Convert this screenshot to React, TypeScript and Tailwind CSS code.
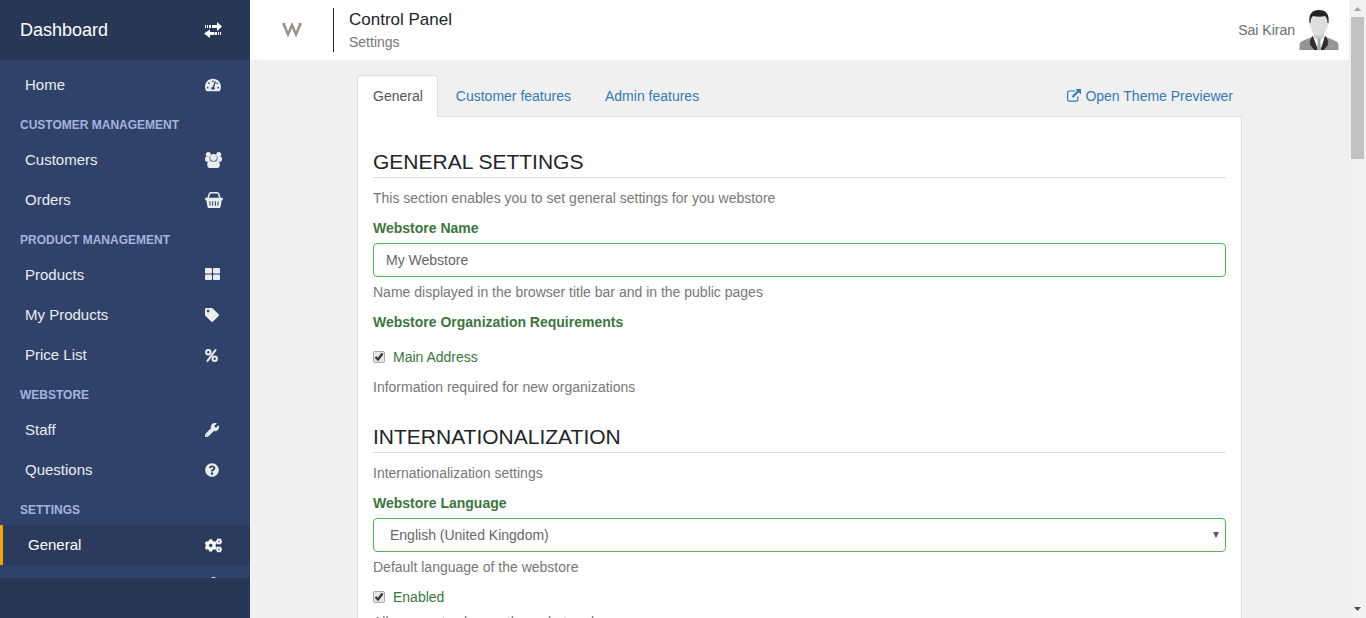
import type { ReactNode } from "react";
import {
  FaCogs,
  FaQuestionCircle,
  FaTachometerAlt,
  FaTag,
  FaUser,
  FaWrench,
} from "react-icons/fa";

function TransferIcon() {
  return (
    <svg width="18" height="16" viewBox="0 0 18 16" fill="currentColor" aria-hidden="true">
      <path d="M1 3h1v3H1zM3 3h1v3H3zM5 3h2v3H5zM8 3h5V0l5 4.500L13 9V6H8z" />
      <path d="M17 10h-1v3h1zM15 10h-1v3h1zM13 10h-2v3h2zM10.500 10H6V7.500L0 11.500 6 16v-3h4.500z" />
    </svg>
  );
}

function UsersIcon() {
  return (
    <svg width="17" height="16" viewBox="0 0 17 16" fill="currentColor" aria-hidden="true">
      <circle cx="3.300" cy="2.500" r="2.500" />
      <circle cx="13.700" cy="2.500" r="2.500" />
      <path d="M0 7.500C0 5.500.5 4.800 1.500 4.800h3c-.3 1.600.2 2.900 1 3.900-1 .1-2 .5-2.600 1.100C.9 9.800 0 9 0 7.500zM17 7.500c0-2-.5-2.700-1.500-2.700h-3c.3 1.600-.2 2.900-1 3.900 1 .1 2 .5 2.600 1.100 2 0 2.900-.8 2.900-2.300z" />
      <circle cx="8.500" cy="5.500" r="3.400" />
      <path d="M2.200 13c0-2.500.8-4.300 3-4.300 1 .6 2 .9 3.300.9s2.300-.3 3.300-.9c2.200 0 3 1.800 3 4.300 0 2-1 3-2.500 3H4.700c-1.500 0-2.500-1-2.500-3z" />
    </svg>
  );
}

function BasketIcon() {
  return (
    <svg width="18" height="16" viewBox="0 0 18 16" fill="currentColor" aria-hidden="true">
      <path d="M3 6.500 4.200 2.200C4.500 1.200 5 .8 6 .8h6c1 0 1.500.4 1.800 1.400L15 6.500" fill="none" stroke="currentColor" strokeWidth="1.500" />
      <path
        fillRule="evenodd"
        d="M1 5.800h16c1.300 0 1.300 2.400 0 2.400h-.3L15.500 14.700c-.2.900-.6 1.300-1.500 1.300H4c-.9 0-1.300-.4-1.500-1.300L1.300 8.200H1c-1.300 0-1.300-2.400 0-2.400zM4.300 9.300l.4 4.500h1l-.4-4.500zM7.200 9.300v4.500h1V9.300zM9.900 9.300v4.500h1V9.300zM12.700 9.300l-.4 4.500h1l.4-4.500z"
      />
    </svg>
  );
}

function GridIcon() {
  return (
    <svg width="15" height="12" viewBox="0 0 15 12" fill="currentColor" className="-translate-y-px" aria-hidden="true">
      <rect width="7" height="5.500" rx="1" />
      <rect x="8" width="7" height="5.500" rx="1" />
      <rect y="6.500" width="7" height="5.500" rx="1" />
      <rect x="8" y="6.500" width="7" height="5.500" rx="1" />
    </svg>
  );
}

function PercentIcon() {
  return (
    <svg width="13" height="13" viewBox="0 0 13 13" fill="none" stroke="currentColor" strokeWidth="2" aria-hidden="true">
      <circle cx="3.300" cy="3.300" r="2.200" />
      <circle cx="9.700" cy="9.700" r="2.200" />
      <path d="M11 .5 2 12.500" />
    </svg>
  );
}

function ExternalIcon() {
  return (
    <svg width="14" height="13" viewBox="0 0 14 13" fill="none" stroke="currentColor" aria-hidden="true">
      <path d="M8 2H2.500C1.300 2 .6 2.700.6 3.800v6.500c0 1.200.8 1.900 1.900 1.900H9c1.200 0 1.900-.8 1.900-1.900V7.500" strokeWidth="1.200" />
      <path d="M5.500 8 11.500 2" strokeWidth="2.200" />
      <path d="M8.500 0H14v5.500z" fill="currentColor" stroke="none" />
    </svg>
  );
}

function Avatar() {
  return (
    <svg width="40" height="40" viewBox="0 0 40 40" aria-hidden="true">
      <path d="M.5 40v-4c0-3.500 1.500-4.500 4-5.500L13 27h14l8.500 3.500c2.500 1 4 2 4 5.500v4z" fill="#969495" />
      <path d="M15 22h10v6l-5 12-5-12z" fill="#c9c9c9" />
      <path d="m14 27 6 3 5-3 1 5-4 8h-4z" fill="#f1f3f3" />
      <path d="M13.500 26.500 18.500 40H16l-5-6 2-1-2-1zM26.500 26.500 22 40h2.500l4.500-6-2-1 2-1z" fill="#2d2d2f" stroke="#2d2d2f" />
      <path d="m18.500 29 1.500-.8 1.800.8-.6 2.500L22 40h-4l.8-8.500z" fill="#9dacaa" />
      <path d="M11 9c0-5 3-7.500 9-7.500S29 4 29 9l.5 3c.6 1 0 3-.9 4C27 22 24 26 20 26s-7-4-8.600-10c-.9-1-1.500-3-.9-4z" fill="#dedede" />
      <path d="M10.500 13C9.300 4 13 0 20 0s10.700 4 9.500 13h-1c.2-3.500-.9-5.500-2.500-7-4 1-8 .8-12 0-1.600 1.500-2.700 3.500-2.500 7z" fill="#242426" />
    </svg>
  );
}

type Item = { label: string; icon: ReactNode; active?: boolean };
type Group = { title?: string; items: Item[] };

const groups: Group[] = [
  { items: [{ label: "Home", icon: <FaTachometerAlt size={16} /> }] },
  {
    title: "CUSTOMER MANAGEMENT",
    items: [
      { label: "Customers", icon: <UsersIcon /> },
      { label: "Orders", icon: <BasketIcon /> },
    ],
  },
  {
    title: "PRODUCT MANAGEMENT",
    items: [
      { label: "Products", icon: <GridIcon /> },
      { label: "My Products", icon: <FaTag size={14} /> },
      { label: "Price List", icon: <PercentIcon /> },
    ],
  },
  {
    title: "WEBSTORE",
    items: [
      { label: "Staff", icon: <FaWrench size={14} stroke="currentColor" strokeWidth={24} /> },
      { label: "Questions", icon: <FaQuestionCircle size={14} /> },
    ],
  },
  {
    title: "SETTINGS",
    items: [
      { label: "General", icon: <FaCogs size={17} stroke="currentColor" strokeWidth={16} />, active: true },
      { label: "Users", icon: <FaUser size={17} /> },
    ],
  },
];

function Sidebar() {
  return (
    <aside className="flex w-[250px] shrink-0 flex-col bg-[#30426a]">
      <div className="flex h-[60px] shrink-0 items-center bg-[#293757] pl-5 text-white">
        <span className="flex-1 text-lg">Dashboard</span>
        <button type="button" aria-label="Toggle menu" className="w-[46px]">
          <TransferIcon />
        </button>
      </div>
      <nav className="min-h-0 flex-1 overflow-hidden pt-[5px]">
        {groups.map((group, i) => (
          <section key={i}>
            {group.title && (
              <h2 className="h-[35px] pl-5 text-xs leading-10 font-bold text-[#a4b3dc]">{group.title}</h2>
            )}
            <ul>
              {group.items.map((item) => (
                <li key={item.label}>
                  <a
                    href="#"
                    className={
                      item.active
                        ? "flex h-10 items-center border-l-[3px] border-[#f0a30a] bg-[#2b3a5d] pl-[25px] text-[15px] text-white"
                        : "flex h-10 items-center pl-[25px] text-[15px] text-[#e9edee]"
                    }
                  >
                    <span className="flex-1">{item.label}</span>
                    <span className="w-[45px]">{item.icon}</span>
                  </a>
                </li>
              ))}
            </ul>
          </section>
        ))}
      </nav>
      <div className="h-10 shrink-0 bg-[#293757]" />
    </aside>
  );
}

function Header() {
  return (
    <header className="flex h-[60px] shrink-0 items-center bg-white pr-[10px]">
      <a href="#" aria-label="Webstore" className="flex w-[83px] justify-center">
        <svg width="20" height="14" viewBox="0 0 20 14" fill="none" stroke="#9b9385" strokeWidth="2.500" aria-hidden="true">
          <path d="M1.500 .5 6 11.500 10 2l4 9.500L18.500 .5M.3 1h3M16.700 1h3" />
        </svg>
      </a>
      <div className="flex h-11 flex-1 flex-col border-l border-[#212529] pl-[15px]">
        <h1 className="text-[17px] leading-6 text-[#212529]">Control Panel</h1>
        <p className="text-sm leading-5 text-[#777]">Settings</p>
      </div>
      <span className="pr-1 text-sm text-[#67706d]">Sai Kiran</span>
      <Avatar />
    </header>
  );
}

function SectionTitle({ children }: { children: ReactNode }) {
  return (
    <h2 className="mb-[10px] border-b border-[#ddd] pb-[3px] text-[21px] leading-6 text-[#212529]">{children}</h2>
  );
}

function Help({ children }: { children: ReactNode }) {
  return <p className="mb-[10px] leading-5 text-[#777]">{children}</p>;
}

function Check({ id, label }: { id: string; label: string }) {
  return (
    <div className="flex h-5 items-center gap-2 text-[#3c763d]">
      <span className="grid size-3 place-items-center">
        <input
          id={id}
          type="checkbox"
          defaultChecked
          className="col-start-1 row-start-1 size-3 appearance-none rounded-[2px] border border-[#a9a9a9] bg-[#e6e6e6]"
        />
        <svg className="pointer-events-none col-start-1 row-start-1" width="10" height="10" viewBox="0 0 10 10" fill="none" stroke="#333" strokeWidth="2.200" aria-hidden="true">
          <path d="M1.500 5 4 7.500 8.500 1.500" />
        </svg>
      </span>
      <label htmlFor={id}>{label}</label>
    </div>
  );
}

function SettingsForm() {
  return (
    <form className="border border-t-0 border-[#ddd] bg-white px-[15px] pt-[33px]">
      <SectionTitle>GENERAL SETTINGS</SectionTitle>
      <Help>This section enables you to set general settings for you webstore</Help>
      <label htmlFor="store-name" className="mb-[5px] block leading-5 font-bold text-[#3c763d]">
        Webstore Name
      </label>
      <input
        id="store-name"
        defaultValue="My Webstore"
        className="mb-[5px] block h-[34px] w-full rounded border border-[#52b552] bg-white px-3 text-[#666]"
      />
      <Help>Name displayed in the browser title bar and in the public pages</Help>
      <h3 className="mb-[15px] leading-5 font-bold text-[#3c763d]">Webstore Organization Requirements</h3>
      <div className="mb-[10px]">
        <Check id="main-address" label="Main Address" />
      </div>
      <Help>Information required for new organizations</Help>
      <div className="pt-[18px]">
        <SectionTitle>INTERNATIONALIZATION</SectionTitle>
      </div>
      <Help>Internationalization settings</Help>
      <label htmlFor="language" className="mb-[5px] block leading-5 font-bold text-[#3c763d]">
        Webstore Language
      </label>
      <div className="mb-[5px] grid items-center">
        <select
          id="language"
          className="col-start-1 row-start-1 h-[34px] w-full appearance-none rounded border border-[#52b552] bg-white px-4 text-[#666]"
        >
          <option>English (United Kingdom)</option>
        </select>
        <svg className="pointer-events-none col-start-1 row-start-1 mr-[7px] justify-self-end" width="6" height="6" viewBox="0 0 6 6" fill="#555" aria-hidden="true">
          <path d="M0 0h6L3 6z" />
        </svg>
      </div>
      <Help>Default language of the webstore</Help>
      <div className="mb-[5px]">
        <Check id="enabled" label="Enabled" />
      </div>
      <Help>Allow user to change the webstore language</Help>
    </form>
  );
}

function Scrollbar() {
  return (
    <div aria-hidden="true" className="flex w-[17px] shrink-0 flex-col items-center bg-[#f1f1f1]">
      <svg width="17" height="17" viewBox="0 0 17 17" fill="#a3a3a3">
        <path d="M5 11h7L8.500 7z" />
      </svg>
      <div className="h-[142px] w-[13px] bg-[#c1c1c1]" />
      <div className="flex-1" />
      <svg width="17" height="17" viewBox="0 0 17 17" fill="#505050">
        <path d="M5 6h7L8.500 10z" />
      </svg>
    </div>
  );
}

export default function App() {
  return (
    <div className="flex h-screen overflow-hidden bg-[#f0f0f0] font-['Liberation_Sans',Arial,sans-serif] text-sm">
      <Sidebar />
      <div className="flex min-w-0 flex-1 flex-col">
        <Header />
        <main className="min-h-0 flex-1 overflow-hidden px-[107px] pt-[15px]">
          <div className="flex h-[42px] items-stretch text-[#337ab7]">
            <a href="#" className="flex items-center rounded-t border border-b-0 border-[#ddd] bg-white pr-[14px] pb-[2px] pl-[15px] text-[#555]">
              General
            </a>
            <div className="flex flex-1 items-center border-b border-[#ddd]">
              <a href="#" className="px-[18px]">Customer features</a>
              <a href="#" className="px-4">Admin features</a>
              <a href="#" className="ml-auto flex items-center gap-1 pr-[9px]">
                <ExternalIcon />
                Open Theme Previewer
              </a>
            </div>
          </div>
          <SettingsForm />
        </main>
      </div>
      <Scrollbar />
    </div>
  );
}
